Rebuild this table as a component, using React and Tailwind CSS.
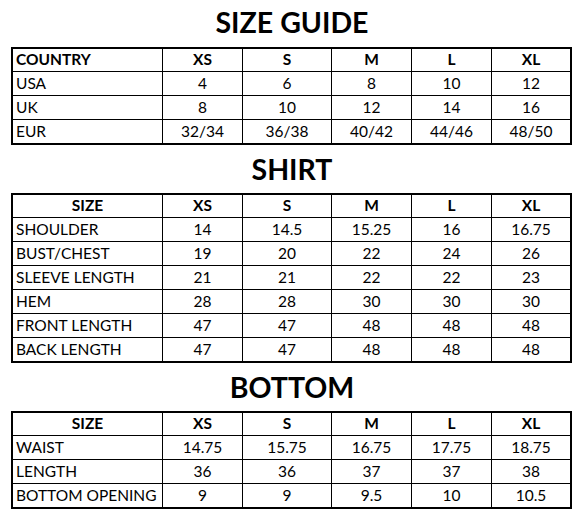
import clsx from 'clsx';

const sizes = ['XS', 'S', 'M', 'L', 'XL'];

const countryRows = [
  ['USA', '4', '6', '8', '10', '12'],
  ['UK', '8', '10', '12', '14', '16'],
  ['EUR', '32/34', '36/38', '40/42', '44/46', '48/50'],
];

const shirtRows = [
  ['SHOULDER', '14', '14.5', '15.25', '16', '16.75'],
  ['BUST/CHEST', '19', '20', '22', '24', '26'],
  ['SLEEVE LENGTH', '21', '21', '22', '22', '23'],
  ['HEM', '28', '28', '30', '30', '30'],
  ['FRONT LENGTH', '47', '47', '48', '48', '48'],
  ['BACK LENGTH', '47', '47', '48', '48', '48'],
];

const bottomRows = [
  ['WAIST', '14.75', '15.75', '16.75', '17.75', '18.75'],
  ['LENGTH', '36', '36', '37', '37', '38'],
  ['BOTTOM OPENING', '9', '9', '9.5', '10', '10.5'],
];

const SizeTable = ({ label, centerLabel, rows }) => {
  const all = [[label, ...sizes], ...rows];
  return (
    <div className="ml-[11px] w-[561px] border-2 border-black grid grid-cols-[150px_80px_89px_80px_80px_78px]">
      {all.map((row, r) =>
        row.map((cell, c) => {
          const head = r === 0;
          const lastRow = r === all.length - 1;
          const left = c === 0 && !(head && centerLabel);
          return (
            <div
              key={r + '-' + c}
              className={clsx(
                'flex items-center text-[15.5px] text-black',
                left ? 'justify-start pl-[3px]' : 'justify-center',
                head && 'font-bold',
                head || lastRow ? 'h-[23px]' : 'h-[24px]',
                c !== 5 && 'border-r border-black',
                !lastRow && 'border-b border-black'
              )}
            >
              {cell}
            </div>
          );
        })
      )}
    </div>
  );
};

const Title = ({ children, className }) => (
  <h2 className={clsx('text-center text-[28.5px] font-bold leading-[34px] text-black', className)}>
    {children}
  </h2>
);

export default function App() {
  return (
    <div className="w-[584px] h-[521px] bg-white font-['Lato',sans-serif] overflow-hidden">
      {/* Size guide */}
      <Title className="pt-[5px] mb-[8px]">SIZE GUIDE</Title>
      <SizeTable label="COUNTRY" rows={countryRows} />

      {/* Shirt */}
      <Title className="mt-[7px] mb-[7px]">SHIRT</Title>
      <SizeTable label="SIZE" centerLabel rows={shirtRows} />

      {/* Bottom */}
      <Title className="mt-[7px] mb-[7px]">BOTTOM</Title>
      <SizeTable label="SIZE" centerLabel rows={bottomRows} />
    </div>
  );
}
